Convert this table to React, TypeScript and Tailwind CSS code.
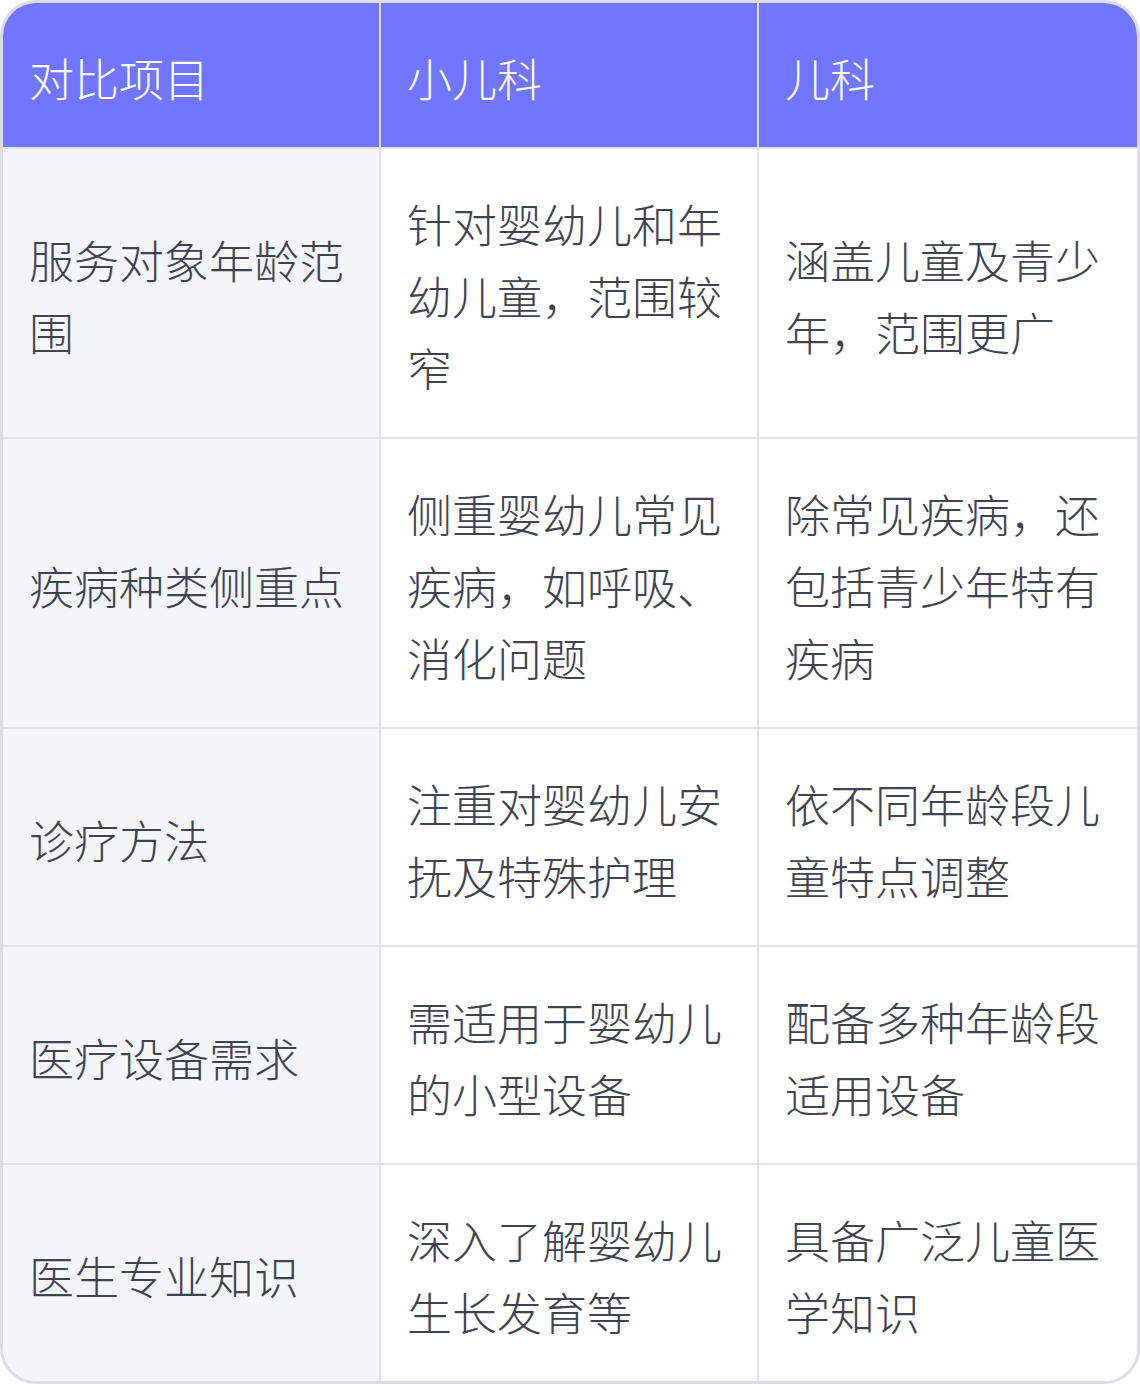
import React from "react";

const rows: [string, string, string][] = [
  ["服务对象年龄范围", "针对婴幼儿和年幼儿童，范围较窄", "涵盖儿童及青少年，范围更广"],
  ["疾病种类侧重点", "侧重婴幼儿常见疾病，如呼吸、消化问题", "除常见疾病，还包括青少年特有疾病"],
  ["诊疗方法", "注重对婴幼儿安抚及特殊护理", "依不同年龄段儿童特点调整"],
  ["医疗设备需求", "需适用于婴幼儿的小型设备", "配备多种年龄段适用设备"],
  ["医生专业知识", "深入了解婴幼儿生长发育等", "具备广泛儿童医学知识"],
];

export default function App() {
  const font = { fontFamily: '"Noto Sans CJK SC", "Noto Sans", sans-serif' };
  return (
    <div className="w-[1140px] h-[1384px] bg-white" style={font}>
      <div className="w-full h-full border-[3px] border-[#dcdde2] rounded-[36px] overflow-hidden grid grid-cols-3 text-[45px] leading-[72px] font-light">
        {["对比项目", "小儿科", "儿科"].map((h, i) => (
          <div
            key={h}
            className={`bg-[#7076ff] text-white pl-[26px] pr-[27px] pt-[39px] pb-[33px] border-b-2 border-[#e1e2e7] ${i < 2 ? "border-r-2" : ""}`}
          >
            {h}
          </div>
        ))}
        {rows.map((r, ri) =>
          r.map((c, ci) => (
            <div
              key={ri + "-" + ci}
              className={`flex items-center pl-[26px] pr-[27px] pt-[39px] pb-[33px] text-[#3f4351] border-[#e1e2e7] ${ci < 2 ? "border-r-2" : ""} ${ri < rows.length - 1 ? "border-b-2" : ""} ${ci === 0 ? "bg-[#f4f5f9]" : "bg-white"}`}
            >
              <span>{c}</span>
            </div>
          ))
        )}
      </div>
    </div>
  );
}
